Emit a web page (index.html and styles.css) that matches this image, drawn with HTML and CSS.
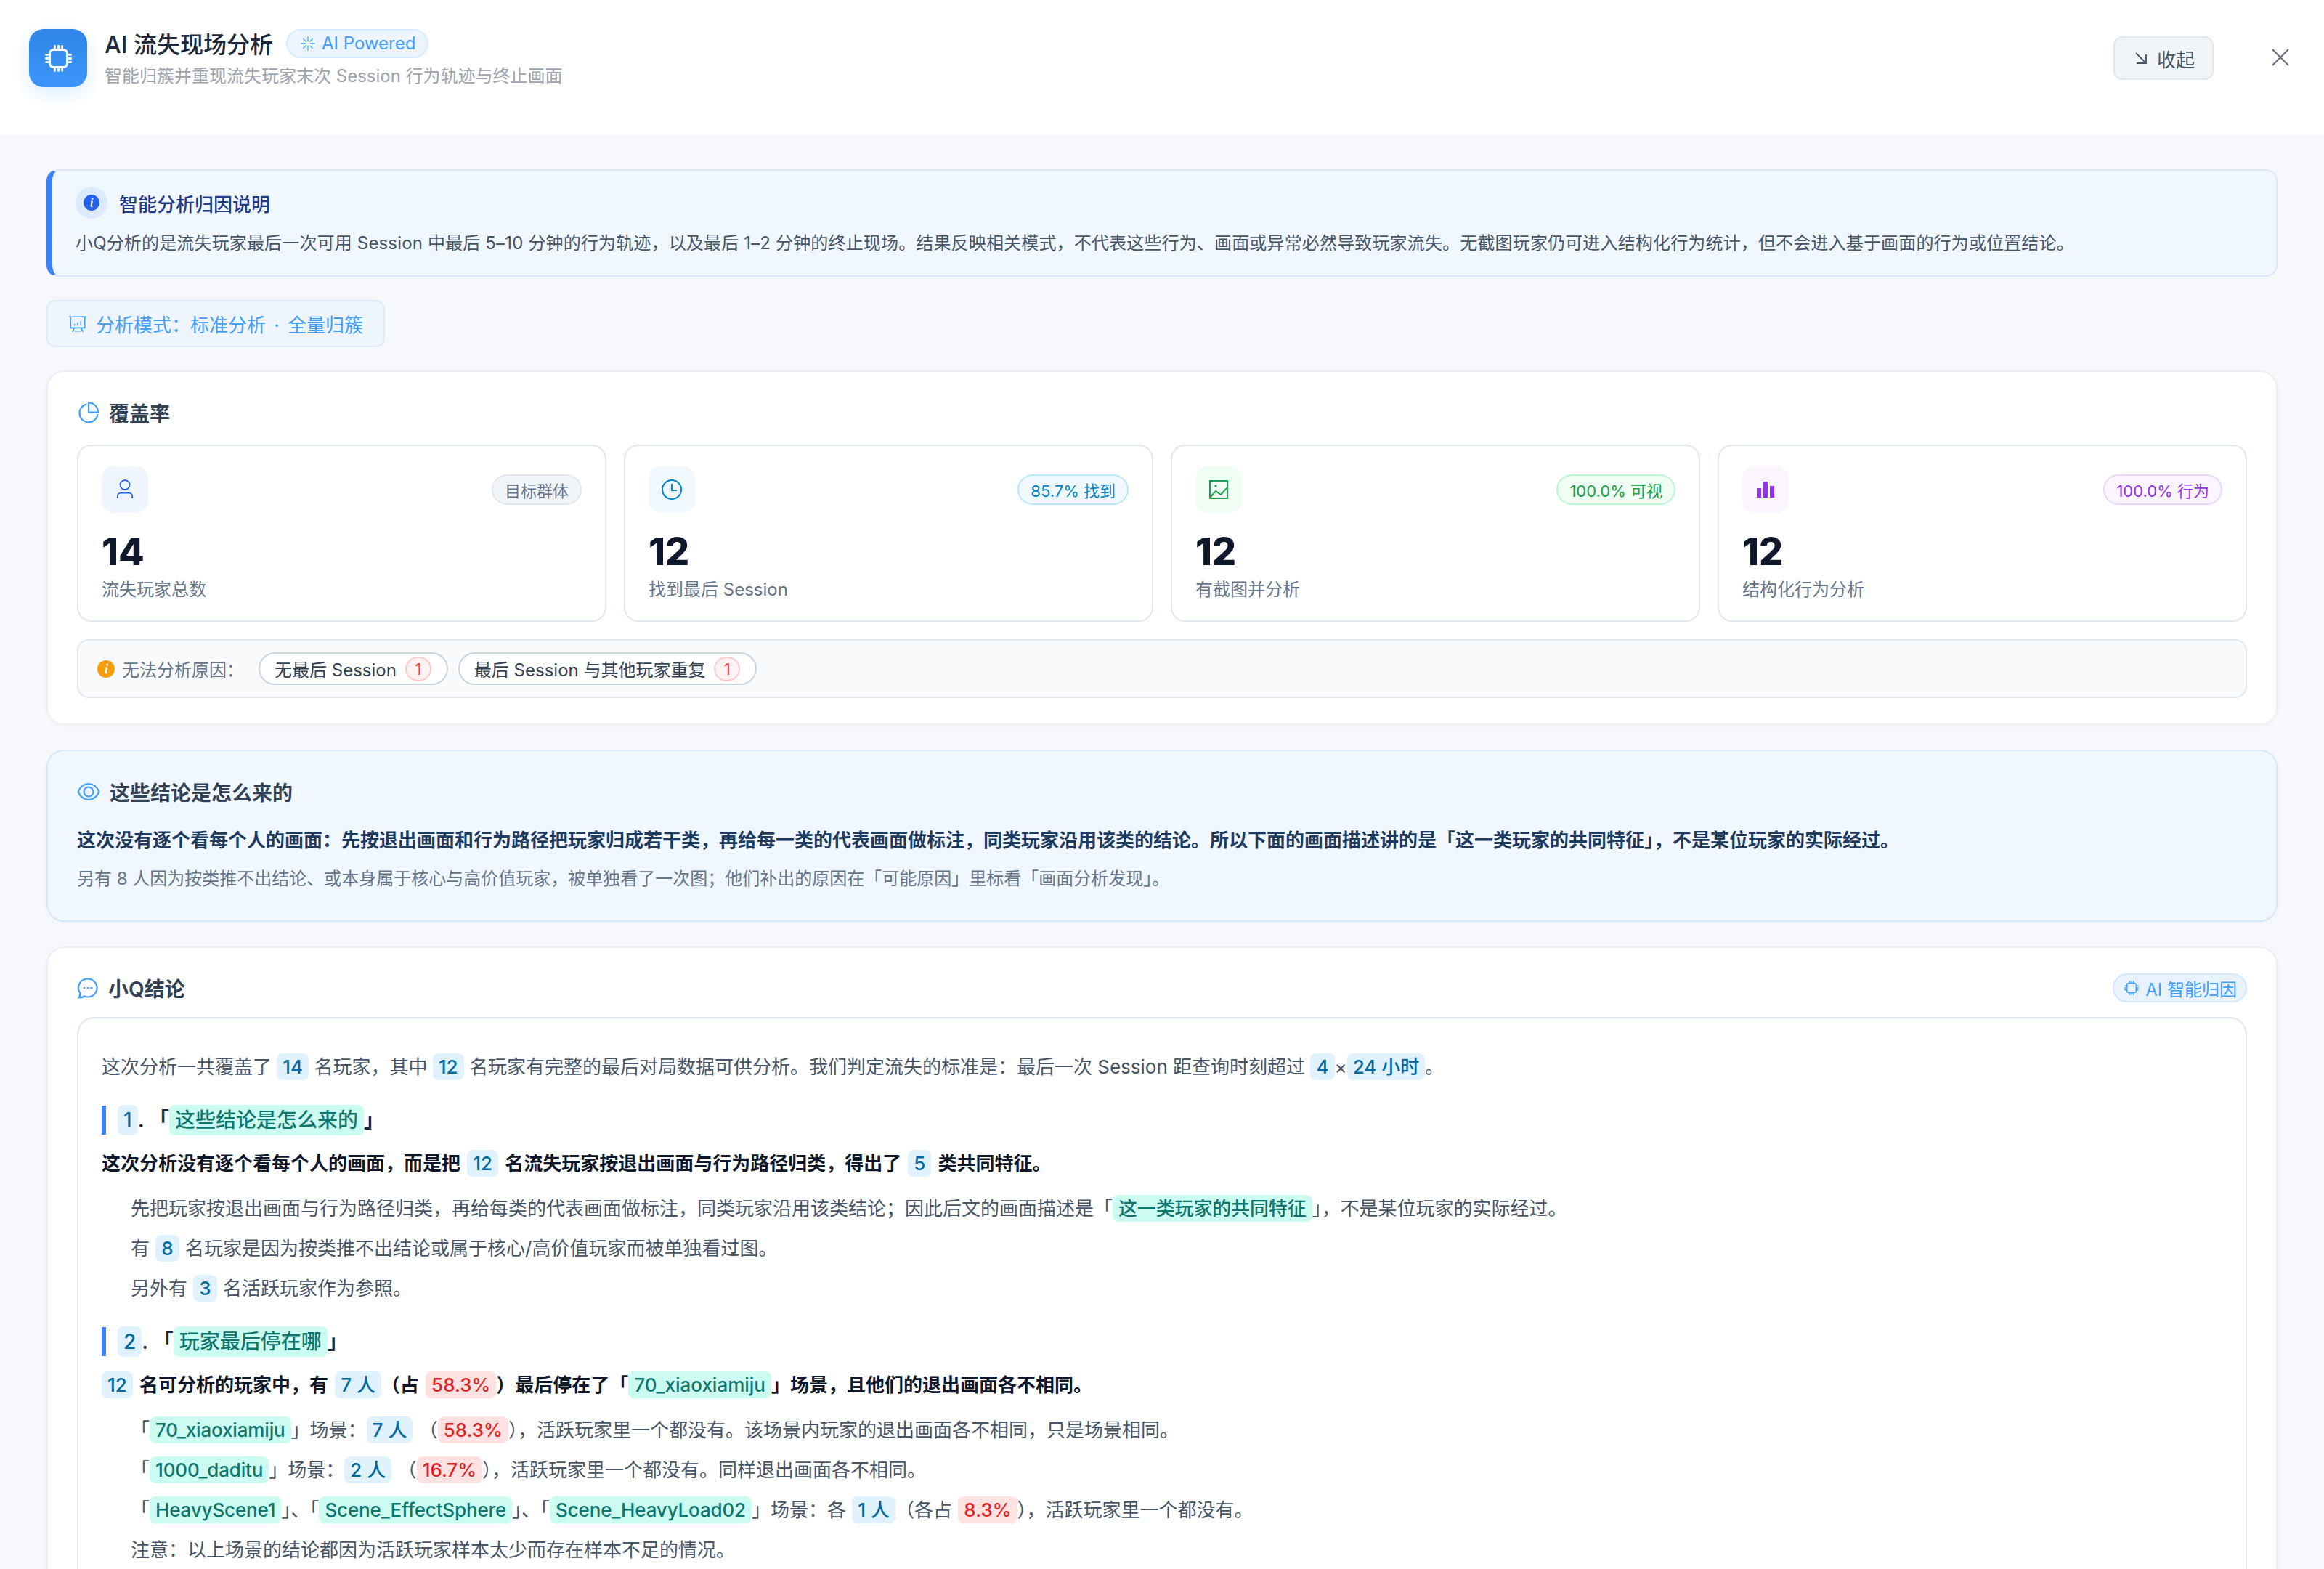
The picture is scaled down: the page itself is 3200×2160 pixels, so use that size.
FILE: index.html
```html
<!DOCTYPE html>
<html lang="zh-CN">
  <head>
    <meta charset="UTF-8" />
    <meta name="viewport" content="width=device-width, initial-scale=1.0" />
    <title>AI 流失现场分析</title>
    <link rel="stylesheet" href="styles.css">
  </head>
  <body>
    <svg class="sprite" width="0" height="0">
      <symbol id="cpu" viewBox="0 0 24 24" fill="none" stroke="currentColor" stroke-width="1.7" stroke-linecap="round" stroke-linejoin="round">
        <rect x="5" y="5" width="14" height="14" rx="3"/>
        <path d="M9 2v3M12 2v3M15 2v3M9 19v3M12 19v3M15 19v3M2 9h3M2 12h3M2 15h3M19 9h3M19 12h3M19 15h3"/>
      </symbol>
    </svg>

    <header class="top">
      <div class="top-left">
        <div class="logo"><svg width="41" height="41"><use href="#cpu"/></svg></div>
        <div>
          <div class="title-row">
            <h1>AI 流失现场分析</h1>
            <span class="powered">
              <svg width="22" height="22" viewBox="0 0 24 24" fill="none" stroke="currentColor" stroke-width="1.4" stroke-linecap="round"><path d="M12 2v6M12 16v6M2 12h6M16 12h6M5 5l4 4M19 5l-4 4M5 19l4-4M19 19l-3-3"/></svg>
              AI Powered
            </span>
          </div>
          <p class="subtitle">智能归簇并重现流失玩家末次 Session 行为轨迹与终止画面</p>
        </div>
      </div>
      <div class="top-actions">
        <button class="fold">
          <svg width="20" height="20" viewBox="0 0 20 20" fill="none" stroke="currentColor" stroke-width="1.8"><path d="M3 3l14 14M4 17h13V5"/></svg>
          收起
        </button>
        <svg class="close" width="24" height="24" viewBox="0 0 24 24" fill="none" stroke="currentColor" stroke-width="2.4"><path d="M1 1l22 22M23 1L1 23"/></svg>
      </div>
    </header>

    <main class="page">
      <section class="notice">
        <div class="notice-title">
          <span class="notice-icon">
            <svg width="22" height="22" viewBox="0 0 22 22"><circle cx="11" cy="11" r="11" fill="#2563eb"/><path d="M11.600 4.600h2.200l-.4 2.200h-2.200zM10.600 8.600h2.400l-1.200 6.400c-.1.500.3.600 1 .3l-.2 1.200c-1.600.8-3.400.4-3-1.500l.9-5h-1z" fill="#fff"/></svg>
          </span>
          智能分析归因说明
        </div>
        <p>小Q分析的是流失玩家最后一次可用 Session 中最后 5–10 分钟的行为轨迹，以及最后 1–2 分钟的终止现场。结果反映相关模式，不代表这些行为、画面或异常必然导致玩家流失。无截图玩家仍可进入结构化行为统计，但不会进入基于画面的行为或位置结论。</p>
      </section>

      <div class="mode">
        <svg width="26" height="26" viewBox="0 0 24 24" fill="none" stroke="currentColor" stroke-width="1.5"><path d="M1 3h22M3 3v14h18V3M7.500 17l-2 5M16.500 17l2 5M8 21h8"/><path d="M8 14v-2M12 14v-4M16 14V8"/></svg>
        分析模式：标准分析 · 全量归簇
      </div>

      <section class="card coverage">
        <h2 class="card-title">
          <svg class="title-icon" width="30" height="30" viewBox="0 0 30 30" fill="none" stroke="currentColor" stroke-width="2.2"><path d="M12 3.500A12.600 12.600 0 1 0 27.600 17"/><path d="M15 1.500a13 13 0 0 1 13 13H15z"/></svg>
          覆盖率
        </h2>
        <div class="stats">
          <div class="stat">
            <div class="stat-top">
              <span class="stat-icon si-blue"><svg width="24" height="28" viewBox="0 0 26 30" fill="none" stroke="currentColor" stroke-width="2"><circle cx="13" cy="8" r="7"/><path d="M2 28v-3a5 5 0 0 1 5-5h12a5 5 0 0 1 5 5v3"/></svg></span>
              <span class="tag tag-gray">目标群体</span>
            </div>
            <div class="stat-num">14</div>
            <div class="stat-label">流失玩家总数</div>
          </div>
          <div class="stat">
            <div class="stat-top">
              <span class="stat-icon si-sky"><svg width="30" height="30" viewBox="0 0 30 30" fill="none" stroke="currentColor" stroke-width="2"><circle cx="15" cy="15" r="13"/><path d="M15 7v9h7"/></svg></span>
              <span class="tag tag-sky">85.7% 找到</span>
            </div>
            <div class="stat-num">12</div>
            <div class="stat-label">找到最后 Session</div>
          </div>
          <div class="stat">
            <div class="stat-top">
              <span class="stat-icon si-green"><svg width="28" height="28" viewBox="0 0 28 28" fill="none" stroke="currentColor" stroke-width="2"><rect x="2" y="2" width="24" height="24"/><path d="M2 25l8-9 7 5 9-10"/><circle cx="10" cy="9" r="1.600" fill="currentColor" stroke="none"/></svg></span>
              <span class="tag tag-green">100.0% 可视</span>
            </div>
            <div class="stat-num">12</div>
            <div class="stat-label">有截图并分析</div>
          </div>
          <div class="stat">
            <div class="stat-top">
              <span class="stat-icon si-purple"><svg width="26" height="26" viewBox="0 0 26 26" fill="currentColor"><rect x="1" y="11" width="6" height="13"/><rect x="10" y="2" width="6" height="22"/><rect x="19" y="8" width="6" height="16"/></svg></span>
              <span class="tag tag-purple">100.0% 行为</span>
            </div>
            <div class="stat-num">12</div>
            <div class="stat-label">结构化行为分析</div>
          </div>
        </div>
        <div class="reasons">
          <svg width="24" height="24" viewBox="0 0 22 22"><circle cx="11" cy="11" r="11" fill="#f59e0b"/><path d="M11.600 4.600h2.200l-.4 2.200h-2.200zM10.600 8.600h2.400l-1.200 6.400c-.1.500.3.600 1 .3l-.2 1.200c-1.600.8-3.400.4-3-1.500l.9-5h-1z" fill="#fff"/></svg>
          <span class="reasons-label">无法分析原因：</span>
          <span class="reason">无最后 Session <b class="count">1</b></span>
          <span class="reason">最后 Session 与其他玩家重复 <b class="count">1</b></span>
        </div>
      </section>

      <section class="card explain">
        <h2 class="card-title">
          <svg class="title-icon" width="32" height="30" viewBox="0 0 32 30" fill="none" stroke="currentColor" stroke-width="2.2"><path d="M1.500 15C5 7.500 10 4 16 4s11 3.500 14.500 11C27 22.500 22 26 16 26S5 22.500 1.500 15z"/><circle cx="16" cy="15" r="6.500"/></svg>
          这些结论是怎么来的
        </h2>
        <p class="explain-main">这次没有逐个看每个人的画面：先按退出画面和行为路径把玩家归成若干类，再给每一类的代表画面做标注，同类玩家沿用该类的结论。所以下面的画面描述讲的是「这一类玩家的共同特征」，不是某位玩家的实际经过。</p>
        <p class="explain-sub">另有 8 人因为按类推不出结论、或本身属于核心与高价值玩家，被单独看了一次图；他们补出的原因在「可能原因」里标看「画面分析发现」。</p>
      </section>

      <section class="card conclusion">
        <div class="conclusion-head">
          <h2 class="card-title">
            <svg class="title-icon" width="30" height="30" viewBox="0 0 30 30" fill="none" stroke="currentColor" stroke-width="2.2"><path d="M15 2.500a12.500 12.500 0 0 1 0 25c-2 0-3.500-.4-5-1-2 1.500-4.500 2-7.500 2 1-1.500 2-3.500 2-6A12.500 12.500 0 0 1 15 2.500z"/><path d="M9.500 15h1M14.500 15h1M19.500 15h1" stroke-linecap="round"/></svg>
            小Q结论
          </h2>
          <span class="ai-tag"><svg width="22" height="22"><use href="#cpu"/></svg>AI 智能归因</span>
        </div>
        <div class="report">
          <p class="lead">这次分析一共覆盖了 <span class="num">14</span> 名玩家，其中 <span class="num">12</span> 名玩家有完整的最后对局数据可供分析。我们判定流失的标准是：最后一次 Session 距查询时刻超过 <span class="num">4</span>×<span class="num">24 小时</span>。</p>

          <h3 class="point"><span class="num">1</span>. 「<span class="term">这些结论是怎么来的</span>」</h3>
          <p class="point-main">这次分析没有逐个看每个人的画面，而是把 <span class="num">12</span> 名流失玩家按退出画面与行为路径归类，得出了 <span class="num">5</span> 类共同特征。</p>
          <ul class="details">
            <li>先把玩家按退出画面与行为路径归类，再给每类的代表画面做标注，同类玩家沿用该类结论；因此后文的画面描述是「<span class="term">这一类玩家的共同特征</span>」，不是某位玩家的实际经过。</li>
            <li>有 <span class="num">8</span> 名玩家是因为按类推不出结论或属于核心/高价值玩家而被单独看过图。</li>
            <li>另外有 <span class="num">3</span> 名活跃玩家作为参照。</li>
          </ul>

          <h3 class="point"><span class="num">2</span>. 「<span class="term">玩家最后停在哪</span>」</h3>
          <p class="point-main"><span class="num">12</span> 名可分析的玩家中，有 <span class="num">7 人</span>（占 <span class="pct">58.3%</span>）最后停在了「<span class="term">70_xiaoxiamiju</span>」场景，且他们的退出画面各不相同。</p>
          <ul class="details">
            <li>「<span class="term">70_xiaoxiamiju</span>」场景：<span class="num">7 人</span> （<span class="pct">58.3%</span>），活跃玩家里一个都没有。该场景内玩家的退出画面各不相同，只是场景相同。</li>
            <li>「<span class="term">1000_daditu</span>」场景：<span class="num">2 人</span> （<span class="pct">16.7%</span>），活跃玩家里一个都没有。同样退出画面各不相同。</li>
            <li>「<span class="term">HeavyScene1</span>」、「<span class="term">Scene_EffectSphere</span>」、「<span class="term">Scene_HeavyLoad02</span>」场景：各 <span class="num">1 人</span>（各占 <span class="pct">8.3%</span>），活跃玩家里一个都没有。</li>
            <li>注意：以上场景的结论都因为活跃玩家样本太少而存在样本不足的情况。</li>
          </ul>
        </div>
      </section>
    </main>
  </body>
</html>
```

FILE: styles.css
```css
* {
  box-sizing: border-box;
  margin: 0;
  padding: 0;
}
html,
body {
  height: 2160px;
  overflow: hidden;
}
body {
  background: #f6f8fc;
  font-family: Inter, "Noto Sans CJK SC", sans-serif;
  color: #334155;
}
.sprite {
  position: absolute;
}

/* header */
.top {
  height: 186px;
  padding: 0 48px 26px 40px;
  background: #fff;
  display: flex;
  justify-content: space-between;
  align-items: center;
}
.top-left {
  display: flex;
  align-items: center;
  gap: 24px;
}
.logo {
  width: 80px;
  height: 80px;
  border-radius: 20px;
  background: linear-gradient(180deg, #2f86e8, #3c96fa);
  box-shadow: 0 8px 24px rgba(64, 158, 255, 0.2);
  color: #fff;
  display: flex;
  align-items: center;
  justify-content: center;
}
.title-row {
  display: flex;
  align-items: center;
  gap: 18px;
  height: 42px;
}
.title-row h1 {
  font-size: 32px;
  font-weight: 500;
  color: #1e293b;
}
.powered {
  height: 40px;
  margin-top: 1px;
  padding: 0 16px 0 17px;
  border-radius: 20px;
  background: #ecf5ff;
  border: 2px solid #d9ecff;
  color: #409eff;
  font-size: 24px;
  display: flex;
  align-items: center;
  gap: 8px;
}
.subtitle {
  margin-top: 8px;
  font-size: 24px;
  line-height: 34px;
  color: #9ca3af;
}
.top-actions {
  display: flex;
  align-items: center;
  gap: 80px;
}
.fold {
  width: 138px;
  height: 60px;
  padding-left: 2px;
  background: #f1f5f9;
  border: 2px solid #e2e8f0;
  border-radius: 12px;
  color: #475569;
  font-family: inherit;
  font-size: 26px;
  display: flex;
  align-items: center;
  justify-content: center;
  gap: 12px;
}
.close {
  color: #6b7280;
  margin-top: -2px;
}

/* content */
.page {
  padding: 47px 64px 0;
}
.notice {
  height: 148px;
  padding: 22px 38px 0 32px;
  background: #f0f7ff;
  border: 2px solid #dbe7fd;
  border-left: 8px solid #3b82f6;
  border-radius: 16px;
}
.notice-title {
  display: flex;
  align-items: center;
  gap: 16px;
  font-size: 26px;
  font-weight: 500;
  color: #1e3a8a;
}
.notice-icon {
  width: 44px;
  height: 44px;
  border-radius: 50%;
  background: #dbeafe;
  display: flex;
  align-items: center;
  justify-content: center;
}
.notice p {
  margin-top: 16px;
  font-size: 24px;
  line-height: 36px;
  letter-spacing: 0.16px;
  color: #475569;
  white-space: nowrap;
}
.mode {
  width: 466px;
  height: 65px;
  margin-top: 32px;
  padding-left: 28px;
  background: #eef5fe;
  border: 2px solid #dcebfd;
  border-radius: 12px;
  color: #409eff;
  font-size: 26px;
  word-spacing: 4px;
  display: flex;
  align-items: center;
  gap: 12px;
}
.card {
  background: #fff;
  border: 2px solid #eceff6;
  border-radius: 24px;
  padding: 36px 40px;
  box-shadow: 0 2px 8px rgba(15, 23, 42, 0.02);
}
.card-title {
  height: 40px;
  font-size: 28px;
  font-weight: 600;
  color: #334155;
  display: flex;
  align-items: center;
  gap: 13px;
}
.title-icon {
  color: #409eff;
}
.coverage {
  margin-top: 32px;
  padding-bottom: 35px;
}
.coverage .title-icon {
  margin-left: 1px;
}
.stats {
  margin-top: 24px;
  display: grid;
  grid-template-columns: repeat(4, 1fr);
  gap: 24px;
}
.stat {
  height: 244px;
  padding: 28px 32px 0;
  border: 2px solid #e2e8f0;
  border-radius: 20px;
}
.stat-top {
  display: flex;
  justify-content: space-between;
  align-items: center;
}
.stat-icon {
  width: 64px;
  height: 64px;
  border-radius: 16px;
  display: flex;
  align-items: center;
  justify-content: center;
}
.si-blue {
  background: #eff6ff;
  color: #2563eb;
}
.si-sky {
  background: #f0f9ff;
  color: #0284c7;
}
.si-green {
  background: #f0fdf4;
  color: #16a34a;
}
.si-purple {
  background: #faf5ff;
  color: #9333ea;
}
.tag {
  height: 42px;
  padding: 0 16px;
  border-radius: 21px;
  border: 2px solid;
  font-size: 22px;
  display: flex;
  align-items: center;
}
.tag-gray {
  background: #f1f5f9;
  border-color: #e2e8f0;
  color: #64748b;
}
.tag-sky {
  background: #f0f9ff;
  border-color: #bae6fd;
  color: #0284c7;
}
.tag-green {
  background: #f0fdf4;
  border-color: #bbf7d0;
  color: #16a34a;
}
.tag-purple {
  background: #faf5ff;
  border-color: #e9d5ff;
  color: #9333ea;
}
.stat-num {
  margin-top: 26px;
  font-size: 52px;
  line-height: 56px;
  font-weight: 800;
  color: #0f172a;
}
.stat-label {
  margin-top: 6px;
  font-size: 24px;
  line-height: 36px;
  color: #64748b;
}
.reasons {
  height: 81px;
  margin-top: 24px;
  padding-left: 26px;
  background: #f8fafc;
  border: 2px solid #e2e8f0;
  border-radius: 16px;
  display: flex;
  align-items: center;
  font-size: 24px;
}
.reasons-label {
  margin: 0 20px 0 10px;
  color: #64748b;
}
.reason {
  height: 45px;
  margin-right: 14px;
  padding: 0 21px 0 20px;
  background: #fff;
  border: 2px solid #cbd5e1;
  border-radius: 23px;
  color: #334155;
  display: flex;
  align-items: center;
  gap: 12px;
}
.count {
  width: 36px;
  height: 34px;
  border-radius: 18px;
  background: #fef2f2;
  border: 2px solid #fecaca;
  color: #ef4444;
  font-size: 22px;
  font-weight: 400;
  display: flex;
  align-items: center;
  justify-content: center;
}
.explain {
  margin-top: 34px;
  height: 237px;
  background: #f0f7ff;
  border-color: #d3e7fd;
}
.explain-main {
  margin-top: 26px;
  font-size: 26px;
  line-height: 42px;
  font-weight: 700;
  color: #1e3a5f;
}
.explain-sub {
  margin-top: 12px;
  font-size: 24px;
  line-height: 40px;
  color: #64748b;
}
.conclusion {
  margin-top: 34px;
  height: 1000px;
  padding-top: 35px;
}
.conclusion-head {
  display: flex;
  justify-content: space-between;
  align-items: center;
}
.ai-tag {
  height: 40px;
  padding: 0 12px 0 13px;
  border-radius: 20px;
  background: #e8f3ff;
  border: 2px solid #d3e7fd;
  color: #409eff;
  font-size: 24px;
  display: flex;
  align-items: center;
  gap: 8px;
}
.report {
  margin-top: 20px;
  padding: 39px 32px 0;
  height: 900px;
  border: 2px solid #e2e8f0;
  border-radius: 24px;
  font-size: 26px;
  color: #475569;
}
.report p,
.report li {
  line-height: 55px;
  white-space: nowrap;
}
.point {
  margin-top: 26px;
  height: 40px;
  padding-left: 16px;
  border-left: 6px solid #3b82f6;
  font-size: 28px;
  line-height: 40px;
  font-weight: 600;
  color: #1e293b;
}
.point-main {
  margin-top: 12px;
  font-weight: 700;
  word-spacing: 3px;
  color: #0f172a;
}
.details {
  margin-top: 7px;
  padding-left: 40px;
  list-style: none;
  word-spacing: 1px;
}
.details .term {
  letter-spacing: -0.15px;
}
.num,
.term,
.pct {
  padding: 3px 8px;
  border-radius: 8px;
  font-weight: 500;
  word-spacing: 0;
}
.point .num,
.point .term {
  padding: 4px 8px;
}
.num {
  background: #e0f2fe;
  color: #0369a1;
}
.term {
  background: #ccfbf1;
  color: #0f766e;
}
.pct {
  background: #fee2e2;
  color: #dc2626;
}
```
